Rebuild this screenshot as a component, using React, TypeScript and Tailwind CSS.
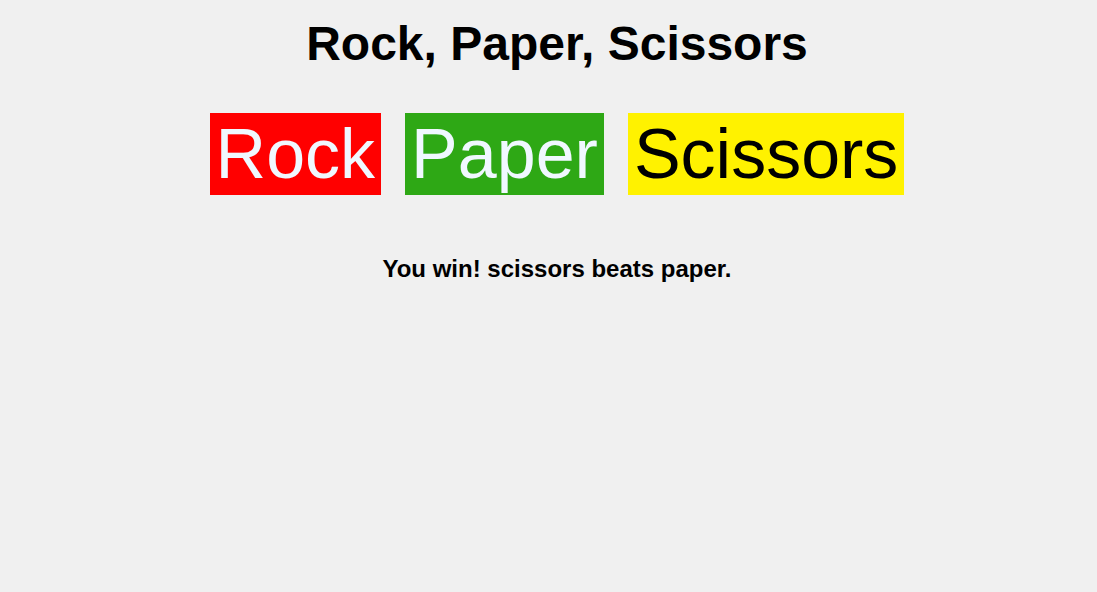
const choices = [
  { label: 'Rock', className: 'bg-[#ff0000] text-[#f0f8ff]' },
  { label: 'Paper', className: 'bg-[#2ea815] text-[#f0f8ff]' },
  { label: 'Scissors', className: 'bg-[#fff200] text-black' },
];

export default function App() {
  return (
    <div className="min-h-[592px] w-full bg-[#f0f0f0] pl-[17px] pt-[16px] text-center font-['Liberation_Sans',Arial,sans-serif] text-black">
      <h1 className="text-[48px] font-bold leading-[55px]">Rock, Paper, Scissors</h1>
      <div className="mt-[42px] flex justify-center gap-[24px]">
        {choices.map((c) => (
          <button
            key={c.label}
            type="button"
            className={`h-[82px] px-[6px] text-[70px] leading-[82px] ${c.className}`}
          >
            {c.label}
          </button>
        ))}
      </div>
      <p className="mt-[60px] text-[24px] font-bold leading-[28px]">You win! scissors beats paper.</p>
    </div>
  );
}
